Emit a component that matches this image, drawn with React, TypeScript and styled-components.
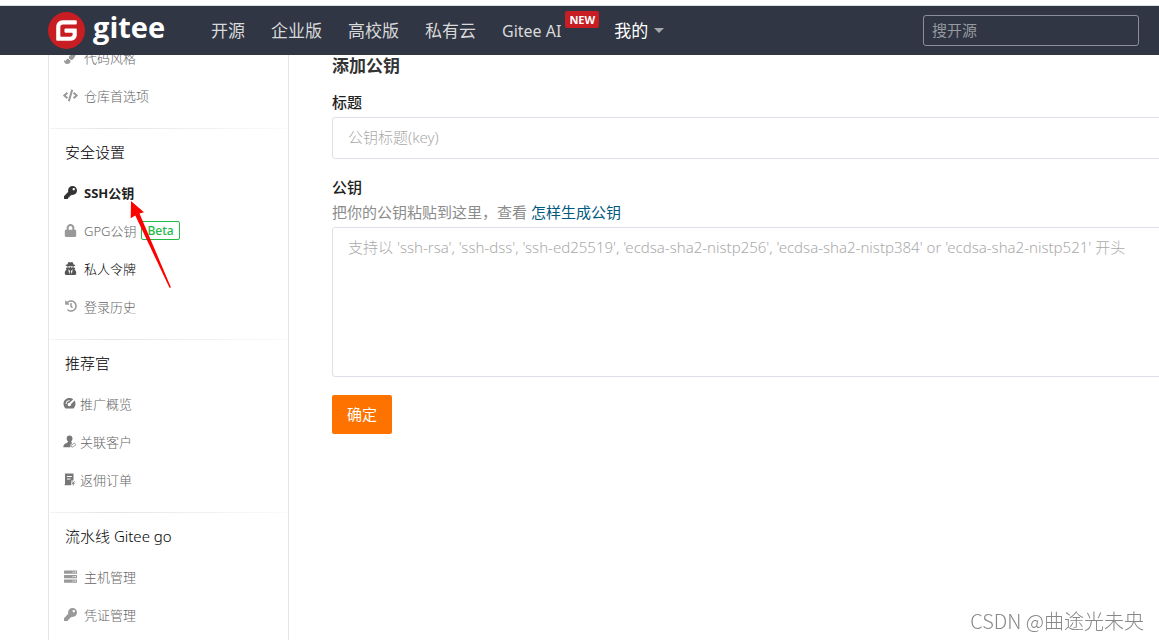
import React from 'react';
import styled, { createGlobalStyle, css } from 'styled-components';
import { FaCode, FaHistory, FaKey, FaLock, FaPaintBrush, FaUserSecret } from 'react-icons/fa';

const uiFont = '"Noto Sans", "Noto Sans CJK SC", sans-serif';

const GlobalStyle = createGlobalStyle`
  * { box-sizing: border-box; }
  html, body { margin: 0; background: #fff; overflow: hidden; }
  body, input, textarea, button { font-family: ${uiFont}; }
  body { font-size: 15px; color: #333; }
  a { text-decoration: none; color: inherit; }
`;

const Page = styled.div`
  display: flex;
  height: 100vh;
  padding: 39px 0 0 48px;
  overflow: hidden;
`;

const Header = styled.header`
  position: fixed;
  top: 0;
  left: 0;
  right: 0;
  z-index: 10;
  border-top: 5px solid #fff;
  background: #fff;
`;

const Bar = styled.div`
  display: flex;
  align-items: center;
  height: 50px;
  padding: 0 20px 0 48px;
  border-top: 1px solid #d5e3e2;
  background: #303643;
`;

const Brand = styled.a`
  display: flex;
  align-items: center;
  gap: 8px;
  width: 163px;
`;

const Wordmark = styled.span`
  height: 44px;
  color: #fff;
  font: 700 29px/36px "Open Sans", sans-serif;
`;

const Nav = styled.nav`
  display: flex;
  align-items: center;
  gap: 26px;
  flex: 1;
`;

const NavLink = styled.a<{ $active?: boolean }>`
  display: flex;
  align-items: center;
  white-space: nowrap;
  font-size: 17px;
  line-height: 48px;
  color: ${(p) => (p.$active ? '#fff' : '#d8d9db')};
`;

const LatinLabel = styled.span`
  font-size: 16px;
`;

const NewBadge = styled.span`
  align-self: flex-start;
  margin: 4px -11px 0 4px;
  padding: 0 4px;
  border-radius: 2px;
  background: #c71d23;
  color: #fff;
  font-size: 11px;
  font-weight: 700;
  line-height: 17px;
`;

const Caret = styled.span`
  margin-left: 6px;
  border: 5px solid transparent;
  border-top-color: #a4a7ad;
  border-bottom: 0;
`;

const Search = styled.input`
  width: 216px;
  height: 31px;
  padding: 0 8px 1px;
  border: 1px solid #8b8f9b;
  border-radius: 3px;
  outline: 0;
  background: transparent;
  color: #fff;
  font-size: 15px;
  &::placeholder { color: #96999f; opacity: 1; }
`;

const Sidebar = styled.aside`
  position: relative;
  flex: 0 0 241px;
  border: 1px solid #e3e5ea;
  border-width: 0 1px;
`;

const Section = styled.section`
  padding-bottom: 14px;
  &:first-child { margin-top: -1px; }
`;

const Divider = styled.div`
  height: 1px;
  margin: 0 1px;
  background: linear-gradient(to right, #f4f5f6, #e3e5e8 25%, #eff0f2 60%, #fafafa);
`;

const SectionTitle = styled.h2`
  margin: 0;
  padding: 8px 16px 6px;
  font-size: 15px;
  font-weight: 300;
  line-height: 30px;
  color: #000;
`;

const List = styled.ul`
  margin: 0;
  padding: 0;
  list-style: none;
`;

const Item = styled.li<{ $tone?: 'active' | 'dark'; $tight?: boolean }>`
  display: flex;
  align-items: center;
  height: 38px;
  padding-left: ${(p) => (p.$tight ? '13px' : '14px')};
  font-size: 13px;
  font-weight: 300;
  color: #666;
  svg { flex: none; color: #999; }
  a {
    display: flex;
    align-items: center;
    gap: ${(p) => (p.$tight ? '3px' : '6px')};
  }
  ${(p) => p.$tight && css`svg { color: #777; }`}
  ${(p) => p.$tone === 'dark' && css`color: #000; svg { color: #555; }`}
  ${(p) => p.$tone === 'active' && css`
    color: #222;
    font-weight: 700;
    svg { color: #333; }
  `}
`;

const IconBox = styled.span`
  display: flex;
  justify-content: center;
  width: 15px;
`;

const Beta = styled.span`
  margin-left: 5px;
  padding: 0 5px;
  border: 1px solid #21ba45;
  border-radius: 2px;
  color: #21ba45;
  font-size: 12px;
  font-weight: 500;
  line-height: 17px;
`;

const Arrow = styled.svg`
  position: absolute;
  left: 80px;
  top: 161px;
  z-index: 5;
`;

const Main = styled.main`
  flex: 1 0 920px;
  padding: 14px 0 0 43px;
`;

const Title = styled.h1`
  margin: 0 0 12px;
  font-size: 17px;
  font-weight: 700;
  line-height: 26px;
`;

const Field = styled.div`
  display: flex;
  flex-direction: column;
  margin-bottom: 17px;
`;

const Label = styled.label`
  margin-bottom: 4px;
  font-size: 15px;
  font-weight: 500;
  line-height: 22px;
  color: #222;
`;

const Hint = styled.p`
  margin: 0 0 5px;
  line-height: 20px;
  color: #8c8c8c;
  a { color: #005980; }
`;

const control = css`
  border: 1px solid #dde0e8;
  border-radius: 3px;
  outline: 0;
  font-size: 15px;
  color: #333;
  &::placeholder { color: #aaa; font-weight: 300; opacity: 1; }
`;

const TextInput = styled.input`
  ${control}
  height: 42px;
  padding: 0 15px 2px;
  font-weight: 300;
`;

const KeyArea = styled.textarea`
  ${control}
  height: 150px;
  padding: 8px 15px;
  font-weight: 300;
  line-height: 22px;
  resize: none;
`;

const Submit = styled.button`
  height: 39px;
  margin-top: 1px;
  padding: 0 15px 2px;
  border: 0;
  border-radius: 2px;
  background: #fe7300;
  color: #fff;
  font-size: 15px;
`;

const Watermark = styled.div`
  position: fixed;
  right: 15px;
  bottom: 4px;
  color: #888;
  font: 300 20px/30px "Noto Sans CJK SC", sans-serif;
`;

const GiteeMark = () => (
  <svg width="37" height="37" viewBox="0 0 36 36" aria-hidden="true">
    <circle cx="18" cy="18" r="18" fill="#c71d23" />
    <path
      fill="#fff"
      d="M27.1 8H14.2A6.2 6.2 0 0 0 8 14.2v13c0 .5.4.8.9.8h13.600a5.500 5.500 0 0 0 5.500-5.500V17a.9.9 0 0 0-.9-.9H16.900a.9.9 0 0 0-.9.9v2.200c0 .5.4.9.9.9h6.200c.5 0 .9.4.9.9v.5a2.600 2.600 0 0 1-2.600 2.600h-8.500a.9.9 0 0 1-.9-.9v-8.500a2.600 2.600 0 0 1 2.600-2.600h12.500c.5 0 .9-.4.9-.9V8.900a.9.9 0 0 0-.9-.9z"
    />
  </svg>
);

const GaugeIcon = () => (
  <svg width="13" height="13" viewBox="0 0 13 13">
    <path fill="currentColor" d="M6.500 1C3 1 .5 3.500.5 6.800c0 1.900.8 3.500 2 4.700h8c1.200-1.200 2-2.800 2-4.700 0-1.300-.4-2.400-1-3.400L8 7.300a1.700 1.700 0 1 1-1.500-1.500L10.300 2.200C9.200 1.400 7.900 1 6.500 1z" />
    <path fill="none" stroke="#fff" strokeWidth="1" d="M3 7a3.500 3.500 0 0 1 3.500-3.500M6.500 7.500 11.500 2" />
  </svg>
);

const CustomerIcon = () => (
  <svg width="13" height="13" viewBox="0 0 13 13">
    <path fill="currentColor" d="M6.600.6a2.900 2.900 0 0 0-2.900 3c0 1.200.5 2.200 1.300 2.900-.2.900-.9 1.300-2 1.700C1.400 8.800.4 10 .3 12.300h7.200c-.5-2 .3-3.500 2-4.200-.8-.3-1.200-.8-1.300-1.600a3.600 3.600 0 0 0 1.300-2.900c0-1.700-1.200-3-2.900-3z" />
    <path fill="none" stroke="currentColor" strokeWidth=".8" d="m9.500 9.700 1-1a1.200 1.200 0 0 1 1.700 1.700l-1 1M11.200 10.700l-1 1a1.200 1.200 0 0 1-1.700-1.700l1-1" />
  </svg>
);

const OrderIcon = () => (
  <svg width="13" height="13" viewBox="0 0 13 13">
    <path fill="currentColor" fillRule="evenodd" d="M2 .6h8.500v6.900H8.300v4.600H2zM4 3v1h4.800V3zm0 2.500v1h3.500v-1z" />
    <path fill="none" stroke="currentColor" strokeWidth=".9" d="m9 8.300 1.300 1.500L11.600 8.300M10.300 9.800v2.700M9 10.300h2.600M1.500 11.800h6" />
  </svg>
);

const ServerIcon = () => (
  <svg width="13" height="13" viewBox="0 0 13 13">
    {[0.5, 5, 9.5].map((y) => (
      <React.Fragment key={y}>
        <rect x="0" y={y} width="13" height="3.2" rx=".5" fill="currentColor" />
        <path d={`M8.500 ${y + 1.6}h1M10.500 ${y + 1.6}h1.500`} stroke="#fff" strokeWidth="1" />
      </React.Fragment>
    ))}
  </svg>
);

type Entry = { label: string; icon: React.ReactNode; tone?: 'active' | 'dark'; beta?: boolean };
type Group = { title?: string; tight?: boolean; items: Entry[] };

const groups: Group[] = [
  {
    items: [
      { label: '代码风格', icon: <FaPaintBrush size={13} /> },
      { label: '仓库首选项', icon: <FaCode size={15} /> },
    ],
  },
  {
    title: '安全设置',
    items: [
      { label: 'SSH公钥', icon: <FaKey size={13} />, tone: 'active' },
      { label: 'GPG公钥', icon: <FaLock size={13} />, beta: true },
      { label: '私人令牌', icon: <FaUserSecret size={13} />, tone: 'dark' },
      { label: '登录历史', icon: <FaHistory size={12} /> },
    ],
  },
  {
    title: '推荐官',
    tight: true,
    items: [
      { label: '推广概览', icon: <GaugeIcon /> },
      { label: '关联客户', icon: <CustomerIcon /> },
      { label: '返佣订单', icon: <OrderIcon /> },
    ],
  },
  {
    title: '流水线 Gitee go',
    items: [
      { label: '主机管理', icon: <ServerIcon /> },
      { label: '凭证管理', icon: <FaKey size={13} /> },
    ],
  },
];

export default function App() {
  return (
    <>
      <GlobalStyle />
      <Header>
        <Bar>
          <Brand href="#">
            <GiteeMark />
            <Wordmark>gitee</Wordmark>
          </Brand>
          <Nav>
            <NavLink href="#">开源</NavLink>
            <NavLink href="#">企业版</NavLink>
            <NavLink href="#">高校版</NavLink>
            <NavLink href="#">私有云</NavLink>
            <NavLink href="#">
              <LatinLabel>Gitee AI</LatinLabel>
              <NewBadge>NEW</NewBadge>
            </NavLink>
            <NavLink href="#" $active>
              我的
              <Caret />
            </NavLink>
          </Nav>
          <Search type="search" aria-label="搜开源" placeholder="搜开源" />
        </Bar>
      </Header>
      <Page>
        <Sidebar>
          {groups.map((group, index) => (
            <React.Fragment key={index}>
              {index > 0 && <Divider />}
              <Section>
                {group.title && <SectionTitle>{group.title}</SectionTitle>}
                <List>
                  {group.items.map((item) => (
                    <Item key={item.label} $tone={item.tone} $tight={group.tight}>
                      <a href="#">
                        <IconBox>{item.icon}</IconBox>
                        {item.label}
                      </a>
                      {item.beta && <Beta>Beta</Beta>}
                    </Item>
                  ))}
                </List>
              </Section>
            </React.Fragment>
          ))}
          <Arrow width="44" height="90" viewBox="0 0 44 90" aria-hidden="true">
            <path fill="#f00" d="M2 1 15 12.300l-4.500 1.200L42 87.500l-1.500.3L6.300 15.500l-4.600 2.800z" />
          </Arrow>
        </Sidebar>
        <Main>
          <Title>添加公钥</Title>
          <Field>
            <Label htmlFor="key-title">标题</Label>
            <TextInput id="key-title" placeholder="公钥标题(key)" />
          </Field>
          <Field>
            <Label htmlFor="key-body">公钥</Label>
            <Hint>
              把你的公钥粘贴到这里，查看 <a href="#">怎样生成公钥</a>
            </Hint>
            <KeyArea
              id="key-body"
              placeholder="支持以 'ssh-rsa', 'ssh-dss', 'ssh-ed25519', 'ecdsa-sha2-nistp256', 'ecdsa-sha2-nistp384' or 'ecdsa-sha2-nistp521' 开头"
            />
          </Field>
          <Submit type="button">确定</Submit>
        </Main>
      </Page>
      <Watermark>CSDN @曲途光未央</Watermark>
    </>
  );
}
